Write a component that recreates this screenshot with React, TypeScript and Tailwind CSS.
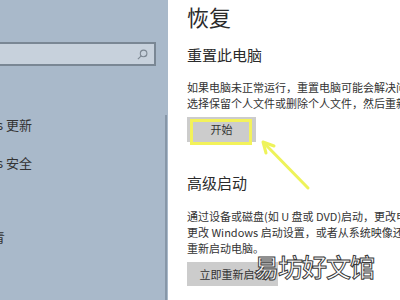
export default function App() {
  const font = { fontFamily: '"Noto Sans CJK SC", "Noto Sans", sans-serif' };

  return (
    <div className="relative w-[400px] h-[300px] overflow-hidden flex bg-white text-[#333]" style={font}>
      {/* Sidebar */}
      <div className="w-[168px] h-full bg-[#a9b9ca] flex shrink-0">
        <div className="flex-1 flex flex-col">
          <div className="mt-[42px] h-[24px] w-[156px] bg-[#c7d1dc] border-2 border-l-0 border-[#7a8794] flex items-center justify-end pr-[6px]">
            <svg width="11" height="11" viewBox="0 0 12 12" fill="none" stroke="#7c8792" strokeWidth="1.2">
              <circle cx="7.2" cy="4.8" r="3.6" />
              <path d="M4.6 7.4 1 11" />
            </svg>
          </div>
          <div className="mt-[49px] text-[13px] leading-[20px] -ml-[3px] whitespace-nowrap">s 更新</div>
          <div className="mt-[18px] text-[13px] leading-[20px] -ml-[3px] whitespace-nowrap">s 安全</div>
          <div className="mt-[54px] text-[13px] leading-[20px] -ml-[8px] whitespace-nowrap">青</div>
        </div>
        <div className="w-[3px] h-full flex flex-col">
          <div className="h-[115px]" />
          <div className="flex-1 w-[2px] bg-[#8797a8]" />
        </div>
      </div>

      {/* Content */}
      <div className="flex-1 pl-[19px] pt-[1px] overflow-hidden">
        <h1 className="text-[22px] leading-[30px] font-normal text-[#2b2b2b]">恢复</h1>
        <h2 className="mt-[13px] text-[15px] leading-[22px] text-[#2b2b2b]">重置此电脑</h2>
        <div className="mt-[13px] text-[11px] leading-[16px] whitespace-nowrap">
          <p>如果电脑未正常运行，重置电脑可能会解决问题。</p>
          <p>选择保留个人文件或删除个人文件，然后重新安装 Windows。</p>
        </div>
        <div className="relative mt-[6px] w-[69px] h-[25px] bg-[#cccccc] flex items-center justify-center text-[11px]">
          开始
          <div className="absolute left-[3px] top-[2px] w-[62px] h-[26px] border-[3px] border-[#f3f25a]" />
        </div>
        <h2 className="mt-[30px] text-[15px] leading-[22px] text-[#2b2b2b]">高级启动</h2>
        <div className="mt-[14px] text-[11px] leading-[16px] whitespace-nowrap">
          <p>通过设备或磁盘(如 U 盘或 DVD)启动，更改电脑的固件设置，</p>
          <p>更改 Windows 启动设置，或者从系统映像还原 Windows。这将</p>
          <p>重新启动电脑。</p>
        </div>
        <div className="mt-[6px] w-[91px] h-[24px] bg-[#cccccc] flex items-center justify-center text-[11px]">
          立即重新启动
        </div>
      </div>

      {/* Arrow */}
      <svg className="absolute left-0 top-0 pointer-events-none" width="400" height="300">
        <path d="M264 143 L308 188" stroke="#eef35a" strokeWidth="3" strokeLinecap="round" />
        <path d="M263 142 L274 146 M263 142 L266 153" stroke="#eef35a" strokeWidth="3" strokeLinecap="round" />
      </svg>

      {/* Watermark */}
      <div className="absolute left-[254px] top-[251px] text-[25px] leading-[30px] text-white font-medium tracking-[-1px] [-webkit-text-stroke:1px_#3a3a3a]">
        易坊好文馆
      </div>
    </div>
  );
}
